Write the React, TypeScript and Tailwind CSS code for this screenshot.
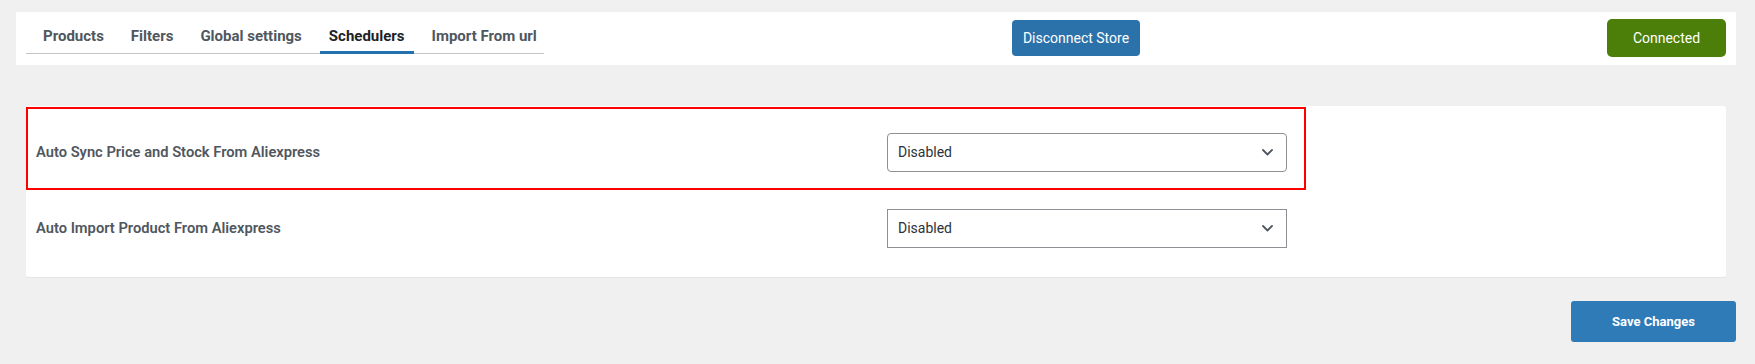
import React from 'react';

const tabs = ['Products', 'Filters', 'Global settings', 'Schedulers', 'Import From url'];
const activeTab = 'Schedulers';

const font = { fontFamily: 'Roboto, "Noto Sans", sans-serif' };

const Chevron = () => (
  <svg width="11" height="7" viewBox="0 0 11 7" fill="none" className="shrink-0">
    <path d="M1 1L5.5 5.5L10 1" stroke="#50575e" strokeWidth="1.8" strokeLinecap="round" strokeLinejoin="round" />
  </svg>
);

const SelectBox = ({ value, rounded }: { value: string; rounded?: boolean }) => (
  <div
    className={`w-[400px] h-[39px] border border-[#8c8f94] bg-white flex items-center justify-between pl-[10px] pr-[13px] text-[14px] text-[#2c3338] ${
      rounded ? 'rounded-[4px]' : 'rounded-none'
    }`}
  >
    <span>{value}</span>
    <Chevron />
  </div>
);

export default function App() {
  return (
    <div className="min-h-[364px] bg-[#f0f0f1] pt-[12px] pl-[16px] pr-[19px]" style={font}>
      {/* Top bar */}
      <div className="h-[53px] bg-white flex items-start pl-[10px] pr-[10px]">
        <div className="mt-[9px] w-[518px] shrink-0 flex gap-[9px] pl-[8px] border-b border-[#c3c4c7]">
          {tabs.map((t) => (
            <div
              key={t}
              className={`-mb-px shrink-0 whitespace-nowrap px-[9px] pt-[5px] pb-[5px] leading-[20px] text-[15px] font-bold border-b-[3px] ${
                t === activeTab ? 'text-[#1d2327] border-[#2271b1]' : 'text-[#50575e] border-transparent'
              }`}
            >
              {t}
            </div>
          ))}
        </div>
        <button className="mt-[8px] ml-[468px] h-[36px] w-[128px] rounded-[4px] bg-[#2b72aa] text-white text-[14px]">
          Disconnect Store
        </button>
        <button className="mt-[7px] ml-auto h-[38px] w-[119px] rounded-[5px] bg-[#4b7f09] text-white text-[14px]">
          Connected
        </button>
      </div>

      {/* Settings card */}
      <div className="mt-[41px] mx-[10px] bg-white pt-[1px] rounded-[2px] shadow-[0_1px_1px_rgba(0,0,0,0.05)]">
        <div className="w-[1280px] border-2 border-[#ff0000] flex items-center pl-[8px] pt-[24px] pb-[16px]">
          <div className="w-[851px] text-[14.7px] font-semibold text-[#50575e]">Auto Sync Price and Stock From Aliexpress</div>
          <SelectBox value="Disabled" rounded />
        </div>
        <div className="flex items-center pl-[10px] pt-[19px] pb-[29px]">
          <div className="w-[851px] text-[14.7px] font-semibold text-[#50575e]">Auto Import Product From Aliexpress</div>
          <SelectBox value="Disabled" />
        </div>
      </div>

      <div className="mt-[24px] flex justify-end">
        <button className="w-[165px] h-[41px] rounded-[3px] bg-[#2e7bb8] text-white text-[13px] font-bold">
          Save Changes
        </button>
      </div>
    </div>
  );
}
